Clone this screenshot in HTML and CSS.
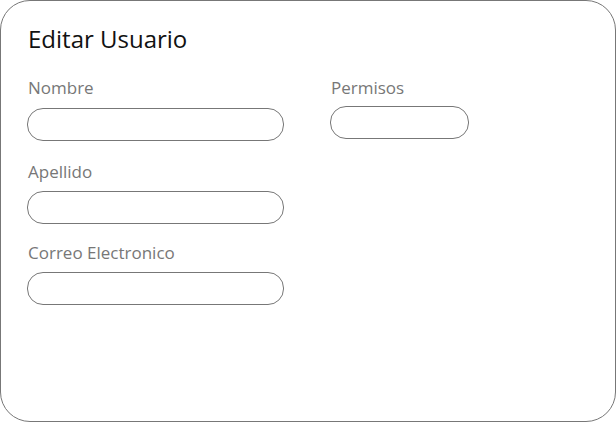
FILE: index.html
```html
<!DOCTYPE html>
<html lang="es">
<head>
<meta charset="utf-8">
<link rel="stylesheet" href="styles.css">
</head>
<body>
<div class="card">
  <h1 class="title">Editar Usuario</h1>
  <div class="grid">
    <div class="col">
      <div class="field field-nombre">
        <label class="label">Nombre</label>
        <div class="input"></div>
      </div>
      <div class="field field-apellido">
        <label class="label">Apellido</label>
        <div class="input"></div>
      </div>
      <div class="field field-correo">
        <label class="label">Correo Electronico</label>
        <div class="input"></div>
      </div>
    </div>
    <div class="col">
      <div class="field field-permisos">
        <label class="label">Permisos</label>
        <div class="input"></div>
      </div>
    </div>
  </div>
</div>
</body>
</html>
```
FILE: styles.css
```css
* { box-sizing: border-box; }
html, body { margin: 0; padding: 0; background: #fff; }
body { font-family: "Open Sans", "Noto Sans", sans-serif; }
.card {
  width: 616px;
  height: 422px;
  border: 1px solid #777;
  border-radius: 30px;
  padding: 23px 26px;
}
.title {
  margin: 0;
  padding-left: 1px;
  font-size: 24px;
  font-weight: 400;
  line-height: 30px;
  color: #111;
}
.grid {
  display: grid;
  grid-template-columns: 257px 139px;
  column-gap: 46px;
  margin-top: 23px;
}
.col { display: flex; flex-direction: column; }
.label {
  display: block;
  padding-left: 1px;
  font-size: 17px;
  line-height: 22px;
  color: #777;
}
.input {
  margin-top: 8px;
  height: 33px;
  border: 1px solid #777;
  border-radius: 16px;
}
.field-nombre .input { margin-top: 9px; }
.field-apellido { margin-top: 20px; }
.field-correo { margin-top: 18px; }
.field-permisos .input { margin-top: 7px; }
```
